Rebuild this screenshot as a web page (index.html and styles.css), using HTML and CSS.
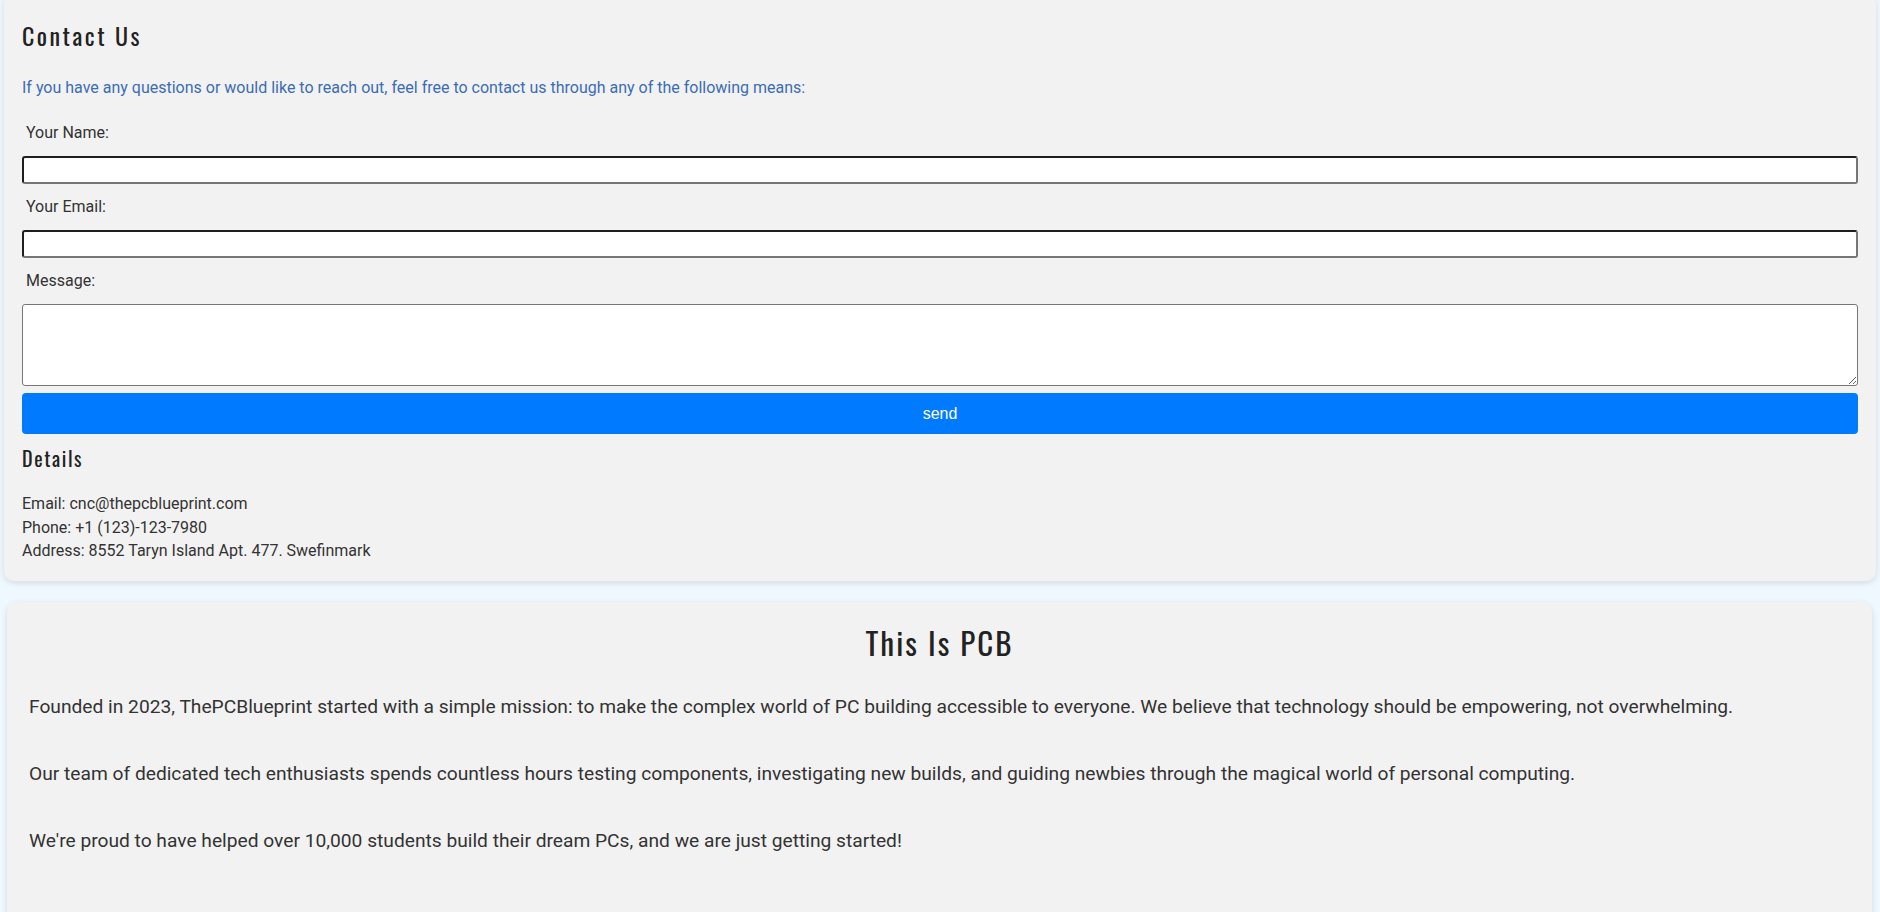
FILE: index.html
```html
<!DOCTYPE html>
<html lang="en">
<head>
<meta charset="utf-8">
<title>Contact Us</title>
<link rel="stylesheet" href="styles.css">
</head>
<body>
<main class="page">
  <section class="card contact">
    <h2 class="title">Contact Us</h2>
    <p class="intro">If you have any questions or would like to reach out, feel free to contact us through any of the following means:</p>
    <form class="form">
      <label class="label" for="name">Your Name:</label>
      <input class="field" id="name" type="text">
      <label class="label" for="email">Your Email:</label>
      <input class="field" id="email" type="email">
      <label class="label" for="msg">Message:</label>
      <textarea class="area" id="msg"></textarea>
      <button class="send" type="button">send</button>
    </form>
    <h3 class="subtitle">Details</h3>
    <div class="details">
      <div>Email: cnc@thepcblueprint.com</div>
      <div>Phone: +1 (123)-123-7980</div>
      <div>Address: 8552 Taryn Island Apt. 477. Swefinmark</div>
    </div>
  </section>
  <section class="card about">
    <h2 class="big-title">This Is PCB</h2>
    <p class="para">Founded in 2023, ThePCBlueprint started with a simple mission: to make the complex world of PC building accessible to everyone. We believe that technology should be empowering, not overwhelming.</p>
    <p class="para">Our team of dedicated tech enthusiasts spends countless hours testing components, investigating new builds, and guiding newbies through the magical world of personal computing.</p>
    <p class="para">We're proud to have helped over 10,000 students build their dream PCs, and we are just getting started!</p>
  </section>
</main>
</body>
</html>
```
FILE: styles.css
```css
html, body {
  margin: 0;
  padding: 0;
}
body {
  background: #f0f8ff;
  font-family: Roboto, "Liberation Sans", sans-serif;
  color: #333;
  overflow: hidden;
}
.page {
  display: flex;
  flex-direction: column;
  gap: 21px;
}
.card {
  background: #f2f2f2;
  border-radius: 10px;
  box-shadow: 0 2px 6px rgba(0, 0, 0, 0.12);
}
.contact {
  margin: -6px 4px 0 4px;
  padding: 26px 18px 18px 18px;
}
.title, .subtitle, .big-title {
  font-family: "Oswald", "Roboto Condensed", "Liberation Sans Narrow", "DejaVu Sans Condensed", "Open Sans", sans-serif;
  font-stretch: condensed;
  font-weight: 400;
  color: #222;
  margin: 0;
}
.title {
  font-size: 24px;
  line-height: 30px;
  letter-spacing: 2.5px;
}
.intro {
  margin: 26px 0 0 0;
  font-size: 16px;
  line-height: 24px;
  color: #3b6db4;
}
.form {
  display: flex;
  flex-direction: column;
  margin-top: 21px;
}
.label {
  font-size: 16px;
  line-height: 24px;
  margin: 0 0 11px 4px;
  color: #333;
}
.field {
  height: 28px;
  box-sizing: border-box;
  margin: 0 0 11px 0;
  border: 2px solid #767676;
  border-top-color: #1e1e1e;
  border-left-color: #1e1e1e;
  border-radius: 3px;
  background: #fff;
  font: 16px Roboto, sans-serif;
}
.area {
  height: 82px;
  box-sizing: border-box;
  border: 1px solid #767676;
  border-radius: 3px;
  background: #fff;
  margin: 0;
  font: 16px Roboto, sans-serif;
}
.send {
  margin-top: 7px;
  height: 41px;
  border: none;
  border-radius: 4px;
  background: #007bff;
  color: #fff;
  font-family: "Liberation Sans", Arial, sans-serif;
  font-size: 16px;
}
.subtitle {
  margin-top: 11px;
  font-size: 20px;
  line-height: 26px;
  letter-spacing: 1.6px;
}
.details {
  margin-top: 21px;
  font-size: 16px;
  line-height: 23.5px;
  color: #333;
}
.about {
  margin: 0 8px 0 7px;
  padding: 20px 22px 80px 22px;
}
.big-title {
  text-align: center;
  font-size: 31px;
  line-height: 40px;
  letter-spacing: 2px;
}
.para {
  margin: 31px 0 0 0;
  font-size: 19.2px;
  line-height: 28.8px;
  color: #333;
}
.para + .para {
  margin-top: 38.5px;
}
```
